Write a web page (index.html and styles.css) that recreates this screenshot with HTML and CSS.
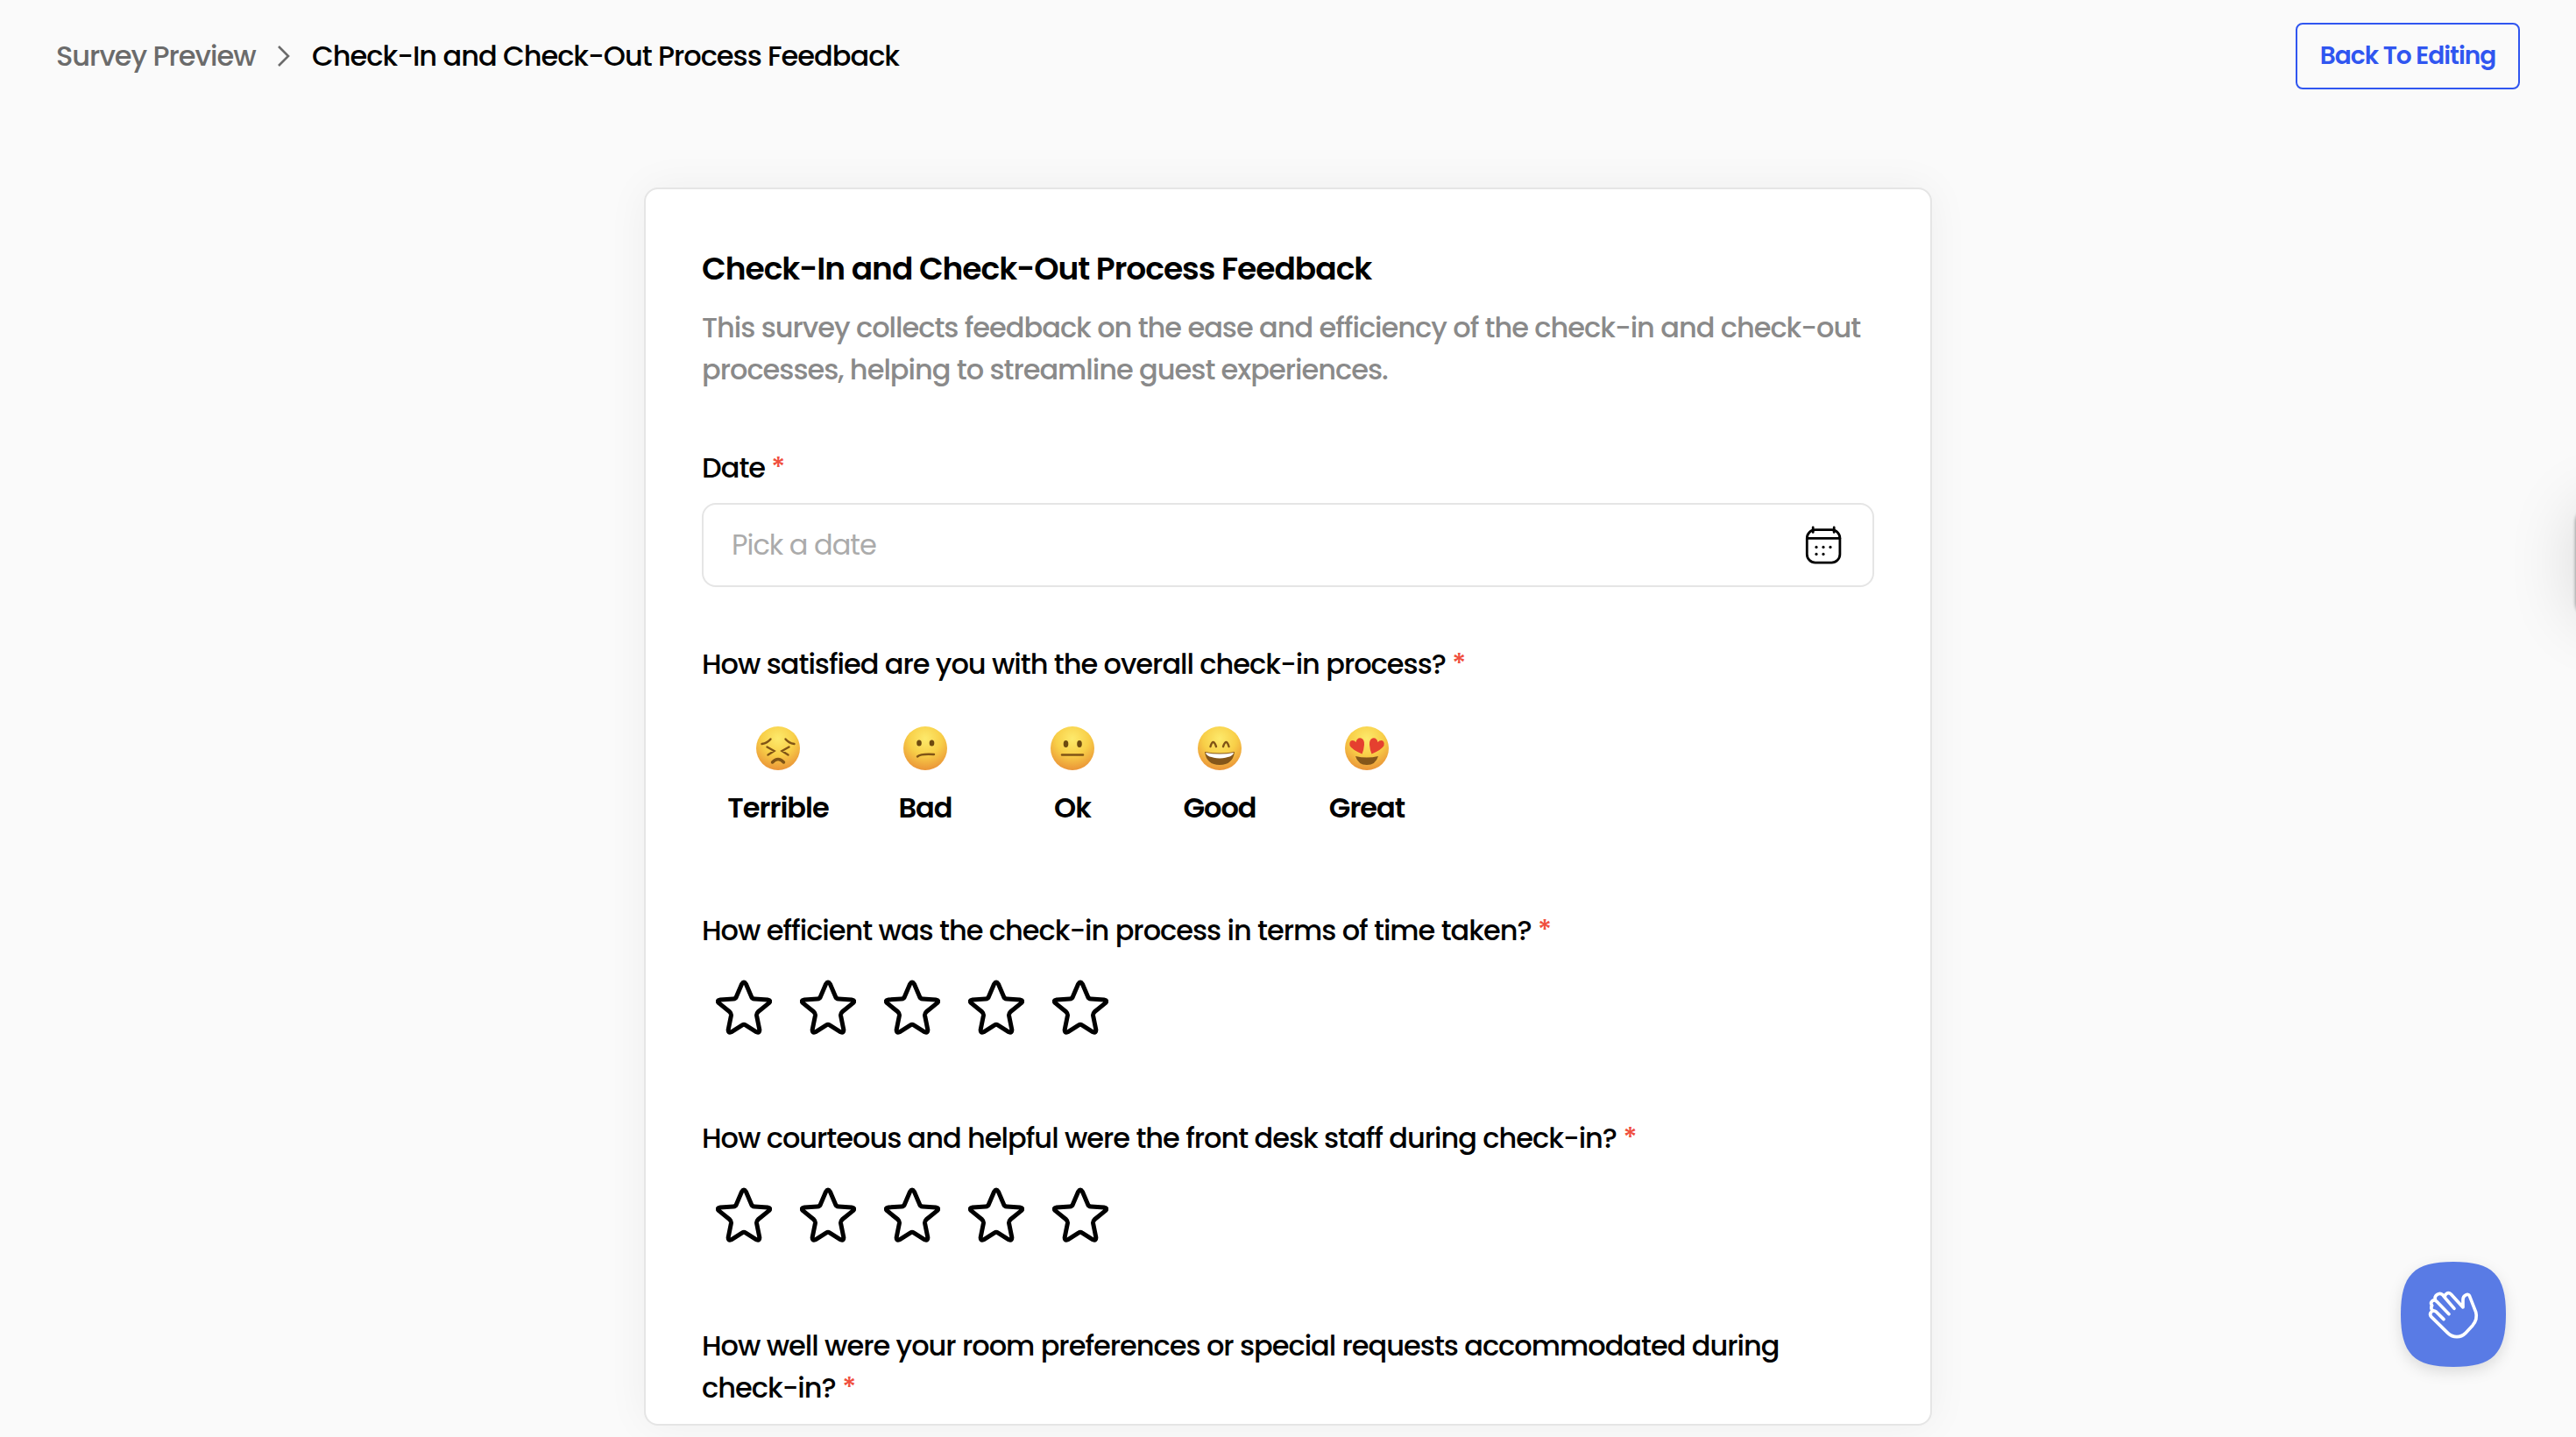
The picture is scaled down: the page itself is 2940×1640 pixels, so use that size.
FILE: index.html
```html
<!DOCTYPE html>
<html lang="en">
<head>
    <meta charset="UTF-8">
    <title>Survey Preview</title>
    <link rel="stylesheet" href="styles.css">
</head>
<body>
    <svg class="defs" width="0" height="0">
        <defs>
            <radialGradient id="face" cx="50%" cy="28%" r="75%">
                <stop offset="0" stop-color="#fdea6c"/>
                <stop offset=".5" stop-color="#f8cf48"/>
                <stop offset="1" stop-color="#e98f36"/>
            </radialGradient>
            <symbol id="star" viewBox="0 0 64 64">
                <path d="M29.6 5 Q32 1.2 34.4 5 L40.6 19.6 Q41.4 21.8 44 22 L59 22.9 Q63.8 23.6 60.4 26.9 L48.2 36.8 Q46.2 38.6 46.6 41.2 L49.8 57 Q50.2 61.4 46.4 59.8 L33.8 51.8 Q32 50.6 30.2 51.8 L17.6 59.8 Q13.8 61.4 14.2 57 L17.4 41.2 Q17.8 38.6 15.8 36.8 L3.6 26.9 Q.2 23.6 5 22.9 L20 22 Q22.6 21.8 23.4 19.6 Z"/>
            </symbol>
        </defs>
    </svg>

    <div id="header">
        <div id="crumbs">
            <span class="parent">Survey Preview</span>
            <svg class="arrow" viewBox="0 0 16 26"><path d="M2 2 L13 13 L2 24"/></svg>
            <span class="page">Check-In and Check-Out Process Feedback</span>
        </div>
        <button id="back">Back To Editing</button>
    </div>

    <div id="survey">
        <h1>Check-In and Check-Out Process Feedback</h1>
        <p class="desc">This survey collects feedback on the ease and efficiency of the check-in and check-out processes, helping to streamline guest experiences.</p>

        <div class="question date">
            <label>Date <i>*</i></label>
            <div class="picker">
                <span>Pick a date</span>
                <svg viewBox="0 0 48 48">
                    <rect x="5.3" y="6.7" width="37.6" height="37.4" rx="9.5"/>
                    <path d="M5.3 16.4 H42.9 M12.2 4 V9.4 M36.2 4 V9.4"/>
                    <g class="dots">
                        <circle cx="16" cy="26.4" r="1.6"/>
                        <circle cx="24" cy="26.4" r="1.6"/>
                        <circle cx="32" cy="26.4" r="1.6"/>
                        <circle cx="16" cy="34.4" r="1.6"/>
                        <circle cx="24" cy="34.4" r="1.6"/>
                    </g>
                </svg>
            </div>
        </div>

        <div class="question mood">
            <label>How satisfied are you with the overall check-in process? <i>*</i></label>
            <div class="faces">
                <div class="face">
                    <svg viewBox="0 0 50 50">
                        <circle cx="25" cy="25" r="25"/>
                        <path d="M6.5 20 Q13 19 16.5 14.5 M43.5 20 Q37 19 33.5 14.5 M12.5 23.5 L20.5 28 L13.5 32.5 M37.5 23.5 L29.5 28 L36.5 32.5"/>
                        <path class="thick" d="M18.5 41 Q25 34 31.5 41"/>
                    </svg>
                    <span>Terrible</span>
                </div>
                <div class="face">
                    <svg viewBox="0 0 50 50">
                        <circle cx="25" cy="25" r="25"/>
                        <ellipse cx="18" cy="19" rx="2.8" ry="3.6"/>
                        <ellipse cx="32.5" cy="19" rx="2.8" ry="3.6"/>
                        <path d="M16 34.5 Q20 31 35 32"/>
                    </svg>
                    <span>Bad</span>
                </div>
                <div class="face">
                    <svg viewBox="0 0 50 50">
                        <circle cx="25" cy="25" r="25"/>
                        <ellipse cx="17.5" cy="20" rx="2.8" ry="4"/>
                        <ellipse cx="33" cy="20" rx="2.8" ry="4"/>
                        <path d="M13 32.5 H37"/>
                    </svg>
                    <span>Ok</span>
                </div>
                <div class="face">
                    <svg viewBox="0 0 50 50">
                        <circle cx="25" cy="25" r="25"/>
                        <path d="M14.5 23 Q17.5 13 21 23 M29 23 Q32.5 13 35.5 23"/>
                        <path class="mouth" d="M8 29 Q25 32 42 29 Q40 44 25 44 Q10 44 8 29 Z"/>
                        <path class="teeth" d="M9 30 Q25 33 41 30 Q40 35.5 25 36.5 Q10 35.5 9 30 Z"/>
                    </svg>
                    <span>Good</span>
                </div>
                <div class="face">
                    <svg viewBox="0 0 50 50">
                        <circle cx="25" cy="25" r="25"/>
                        <path class="heart" d="M19.5 31.5 Q8 26.5 5.5 22 Q4.5 16.5 8.5 16 Q11 16 12.5 18 Q14 12.5 18.5 13.5 Q22.5 15 22 21 Q21.5 27 19.5 31.5 Z"/>
                        <path class="heart" d="M30.5 31.5 Q42 26.5 44.5 22 Q45.5 16.5 41.5 16 Q39 16 37.5 18 Q36 12.5 31.5 13.5 Q27.5 15 28 21 Q28.5 27 30.5 31.5 Z"/>
                        <path class="mouth" d="M12 34 Q25 37 38 34 Q35 44 25 44 Q15 44 12 34 Z"/>
                    </svg>
                    <span>Great</span>
                </div>
            </div>
        </div>

        <div class="question rate">
            <label>How efficient was the check-in process in terms of time taken? <i>*</i></label>
            <div class="stars">
                <svg><use href="#star"/></svg>
                <svg><use href="#star"/></svg>
                <svg><use href="#star"/></svg>
                <svg><use href="#star"/></svg>
                <svg><use href="#star"/></svg>
            </div>
        </div>

        <div class="question rate">
            <label>How courteous and helpful were the front desk staff during check-in? <i>*</i></label>
            <div class="stars">
                <svg><use href="#star"/></svg>
                <svg><use href="#star"/></svg>
                <svg><use href="#star"/></svg>
                <svg><use href="#star"/></svg>
                <svg><use href="#star"/></svg>
            </div>
        </div>

        <div class="question">
            <label>How well were your room preferences or special requests accommodated during check-in? <i>*</i></label>
        </div>
    </div>

    <div id="drawer"></div>

    <div id="help">
        <svg viewBox="0 0 360 360">
            <path class="bg" d="M180 0 C315 0 360 45 360 180 C360 315 315 360 180 360 C45 360 0 315 0 180 C0 45 45 0 180 0 Z"/>
            <path class="hand" d="M147 197 L121 171 C109 162 95 176 104 188 L162 245 C179 261 205 261 221 245 L246 218 C258 204 262 190 257 172 L235 116 C232 108 213 113 213 130 V156 L172 111 C162 101 147 112 152 124 L183 160 M165 179 L123 136 C112 126 98 138 107 150 M152 124 L143 113 C132 103 112 116 119 132 M107 150 C102 156 104 163 110 168"/>
        </svg>
    </div>
</body>
</html>
```
FILE: styles.css
```css
*{
    box-sizing:border-box;
}
body, h1, p{
    margin:0;
    padding:0;
}
body{
    height:1640px;
    overflow:hidden;
    background:#fafafa;
    color:#000;
    font:500 32px/48px Poppins, Inter, "Liberation Sans", sans-serif;
    letter-spacing:-1px;
}
.defs{
    position:absolute;
}
#header{
    display:flex;
    justify-content:space-between;
    align-items:center;
    height:128px;
    padding:0 64px;
}
#crumbs{
    display:flex;
    align-items:center;
}
#crumbs .parent{
    color:#6b6b6b;
    width:228px;
    white-space:nowrap;
}
#crumbs .arrow{
    width:16px;
    height:26px;
    margin:0 24px;
    fill:none;
    stroke:#6b6b6b;
    stroke-width:2.6;
}
#back{
    width:256px;
    height:76px;
    border:2px solid #3056f0;
    border-radius:8px;
    background:none;
    color:#3056f0;
    font:600 28px/40px Poppins, Inter, "Liberation Sans", sans-serif;
    letter-spacing:-1px;
    white-space:nowrap;
}
#survey{
    width:1470px;
    height:1413px;
    margin:86px auto 0;
    padding:64px;
    border:2px solid #e5e5e5;
    border-radius:16px;
    background:#fff;
    box-shadow:0 0 48px rgba(0, 0, 0, .05);
    overflow:hidden;
}
#survey h1{
    font-size:36px;
    font-weight:600;
    line-height:54px;
    white-space:nowrap;
}
#survey .desc{
    margin-top:16px;
    color:#8a8a8a;
}
.question{
    margin-top:64px;
}
.question label{
    display:block;
}
.question i{
    color:#f04f3e;
    font-style:normal;
}
.picker{
    display:flex;
    justify-content:space-between;
    align-items:center;
    height:96px;
    margin-top:16px;
    padding:0 32px;
    border:2px solid #e5e5e5;
    border-radius:16px;
    color:#ababab;
    font-weight:400;
}
.picker svg{
    width:48px;
    height:48px;
    fill:none;
    stroke:#000;
    stroke-width:2.8;
    stroke-linecap:round;
}
.picker .dots{
    fill:#000;
    stroke:none;
}
.mood{
    height:240px;
}
.faces{
    display:flex;
    margin:47px 0 0 3px;
}
.face{
    display:flex;
    flex-direction:column;
    align-items:center;
    gap:19px;
    width:168px;
    font-weight:600;
}
.face svg{
    width:50px;
    height:50px;
    fill:#6d4a10;
}
.face circle{
    fill:url(#face);
}
.face path{
    fill:none;
    stroke:#805416;
    stroke-width:2.4;
    stroke-linecap:round;
}
.face .thick{
    stroke-width:3.4;
}
.face .mouth{
    fill:#84561a;
    stroke:none;
}
.face .teeth{
    fill:#fff;
    stroke:none;
}
.face .heart{
    fill:#e5402f;
    stroke:none;
}
.rate{
    height:173px;
}
.stars{
    display:flex;
    gap:32px;
    margin:32px 0 0 16px;
}
.stars svg{
    width:64px;
    height:64px;
    fill:none;
    stroke:#000;
    stroke-width:5;
    stroke-linejoin:round;
}
#drawer{
    position:fixed;
    top:580px;
    left:2940px;
    width:96px;
    height:124px;
    border-radius:16px;
    box-shadow:0 0 4px rgba(0, 0, 0, .5), 0 0 80px rgba(0, 0, 0, .14);
}
#help{
    position:fixed;
    right:80px;
    bottom:80px;
    width:120px;
    height:120px;
}
#help svg{
    display:block;
    width:120px;
    height:120px;
    overflow:visible;
    filter:drop-shadow(0 6px 8px rgba(0, 0, 0, .12));
}
#help .bg{
    fill:#597be5;
}
#help .hand{
    fill:none;
    stroke:#fff;
    stroke-width:11;
    stroke-linecap:round;
    stroke-linejoin:round;
}
```
